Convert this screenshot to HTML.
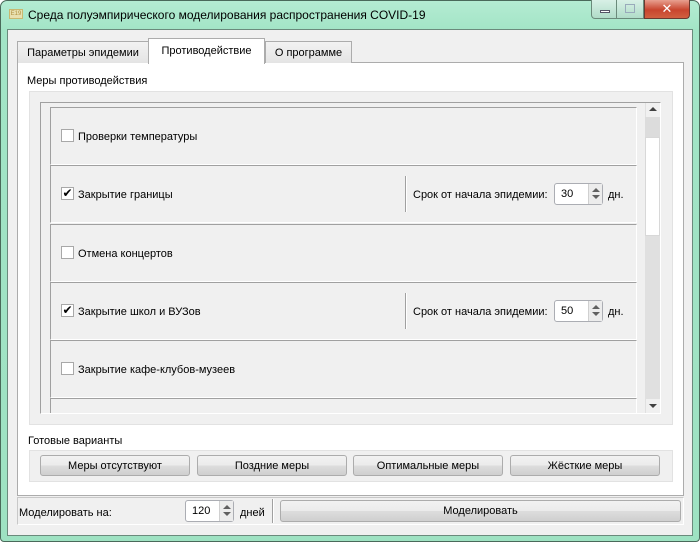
<!DOCTYPE html>
<html><head><meta charset="utf-8"><style>
*{box-sizing:border-box;margin:0;padding:0}
body{width:700px;height:542px;overflow:hidden;background:#fff;font-family:"Liberation Sans","DejaVu Sans",sans-serif;font-size:11px;color:#000;position:relative}
.a{position:absolute}
.win{left:0;top:0;width:700px;height:542px;border-radius:7px 7px 4px 4px;background:linear-gradient(180deg,#b4ecd2 0,#a2e4c6 30px,#9ee2c2 100%);border:1px solid #4a6a5a}
.client{left:7px;top:29px;width:686px;height:507px;background:#f0f0f0;border:1px solid #6b8a7c}
.tab{height:22px;border:1px solid #acacac;border-bottom:none;background:linear-gradient(#f2f2f2,#e4e4e4);text-align:center;line-height:22px}
.pane{left:17px;top:62px;width:667px;height:434px;background:#fff;border:1px solid #acacac}
.sunk{border-top:1px solid #a0a0a0;border-left:1px solid #a0a0a0;border-right:1px solid #fff;border-bottom:1px solid #fff}
.row{left:50px;width:587px;height:58px;background:#f0f0f0;border-top:1px solid #a0a0a0;border-left:1px solid #a0a0a0;border-right:1px solid #fff;border-bottom:1px solid #fff}
.cb{position:absolute;left:10px;width:13px;height:13px;background:#fff;border:1px solid #a8a8a8}
.lbl{position:absolute;left:27px}
.btn{height:21px;border:1px solid #acacac;border-radius:3px;background:linear-gradient(#f2f2f2 0,#ebebeb 50%,#dddddd 51%,#cfcfcf 100%);text-align:center;line-height:20px}
.spin{width:49px;height:22px;background:#fff;border:1px solid #abadb3;border-radius:3px;padding-left:6px;line-height:21px}
.spin i{position:absolute;right:0;top:0;width:14px;height:20px;border-left:1px solid #d0d0d0;background:#ececec}
.spin i:before{content:"";position:absolute;left:3px;top:4px;border:4px solid transparent;border-bottom:4px solid #606060;border-top:none}
.spin i:after{content:"";position:absolute;left:3px;top:11px;border:4px solid transparent;border-top:4px solid #606060;border-bottom:none}
</style></head><body>
<div class="a win"></div>
<div class="a" style="left:9px;top:9px;width:14px;height:10px;background:#e8e0b0;border:1px solid #c8b870;font-size:6px;color:#b09040;line-height:8px;text-align:center">E19</div>
<div class="a" style="left:28px;top:8px;font-size:12px;color:#000">Среда полуэмпирического моделирования распространения COVID-19</div>
<div class="a" style="left:591px;top:0;width:26px;height:19px;border:1px solid #6a8a7a;border-top:none;border-radius:0 0 0 4px;background:linear-gradient(#d8f0e6,#b0dcc8)"><div class="a" style="left:8px;top:10px;width:10px;height:3px;background:#fff;border:1px solid #556"></div></div>
<div class="a" style="left:617px;top:0;width:27px;height:19px;border:1px solid #6a8a7a;border-top:none;border-left:none;background:linear-gradient(#d8f0e6,#b0dcc8)"><div class="a" style="left:8px;top:4px;width:10px;height:9px;border:1px solid #9ab;"></div></div>
<div class="a" style="left:644px;top:0;width:46px;height:19px;border:1px solid #6a3a30;border-top:none;border-radius:0 0 4px 0;background:linear-gradient(#e8a090,#c8452e 55%,#d06040)"><div class="a" style="left:0;width:44px;top:0;text-align:center;color:#fff;font-weight:bold;font-size:13px;line-height:17px">✕</div></div>
<div class="a client"></div>
<div class="a pane"></div>
<div class="a tab" style="left:17px;top:41px;width:132px">Параметры эпидемии</div>
<div class="a tab" style="left:265px;top:41px;width:87px">О программе</div>
<div class="a tab" style="left:148px;top:38px;width:117px;height:26px;background:#fff;line-height:25px;border-bottom:none">Противодействие</div>
<div class="a" style="left:27px;top:75px">Меры противодействия</div>
<div class="a" style="left:29px;top:91px;width:644px;height:334px;border:1px solid #e2e2e2;background:#f0f0f0"></div>
<div class="a sunk" style="left:40px;top:102px;width:621px;height:312px;background:#f0f0f0"></div>
<div class="a row" style="top:107px"><div class="cb" style="top:21px"></div><div class="lbl" style="top:23px">Проверки температуры</div></div>
<div class="a row" style="top:165px"><div class="cb" style="top:21px;text-align:center;line-height:11px;font-size:12px">✔</div><div class="lbl" style="top:23px">Закрытие границы</div>
<div class="a" style="left:354px;top:10px;width:2px;height:36px;border-left:1px solid #a0a0a0;border-right:1px solid #fff"></div>
<div class="a" style="left:362px;top:23px">Срок от начала эпидемии:</div>
<div class="a spin" style="left:503px;top:17px">30<i></i></div>
<div class="a" style="left:557px;top:23px">дн.</div></div>
<div class="a row" style="top:224px"><div class="cb" style="top:21px"></div><div class="lbl" style="top:23px">Отмена концертов</div></div>
<div class="a row" style="top:282px"><div class="cb" style="top:21px;text-align:center;line-height:11px;font-size:12px">✔</div><div class="lbl" style="top:23px">Закрытие школ и ВУЗов</div>
<div class="a" style="left:354px;top:10px;width:2px;height:36px;border-left:1px solid #a0a0a0;border-right:1px solid #fff"></div>
<div class="a" style="left:362px;top:23px">Срок от начала эпидемии:</div>
<div class="a spin" style="left:503px;top:17px">50<i></i></div>
<div class="a" style="left:557px;top:23px">дн.</div></div>
<div class="a row" style="top:340px"><div class="cb" style="top:21px"></div><div class="lbl" style="top:23px">Закрытие кафе-клубов-музеев</div></div>
<div class="a row" style="top:398px;height:15px;border-bottom:none"></div>
<div class="a" style="left:645px;top:103px;width:15px;height:310px;background:#f0f0f0;border-left:1px solid #e0e0e0"></div>
<div class="a" style="left:649px;top:107px;border:4px solid transparent;border-bottom:4px solid #404040;border-top:none"></div>
<div class="a" style="left:645px;top:117px;width:15px;height:20px;background:#dcdcdc"></div>
<div class="a" style="left:645px;top:137px;width:15px;height:99px;background:#fff;border:1px solid #d8d8d8"></div>
<div class="a" style="left:645px;top:236px;width:15px;height:163px;background:#e0e0e0"></div>
<div class="a" style="left:649px;top:404px;border:4px solid transparent;border-top:4px solid #404040;border-bottom:none"></div>
<div class="a" style="left:28px;top:435px">Готовые варианты</div>
<div class="a" style="left:29px;top:450px;width:644px;height:32px;border:1px solid #e2e2e2;background:#f0f0f0"></div>
<div class="a btn" style="left:40px;top:455px;width:150px">Меры отсутствуют</div>
<div class="a btn" style="left:197px;top:455px;width:150px">Поздние меры</div>
<div class="a btn" style="left:353px;top:455px;width:150px">Оптимальные меры</div>
<div class="a btn" style="left:510px;top:455px;width:150px">Жёсткие меры</div>
<div class="a" style="left:17px;top:497px;width:667px;height:28px;border:1px solid #c8c8c8;border-right:1px solid #fff;border-bottom:1px solid #fff"></div>
<div class="a" style="left:19px;top:507px">Моделировать на:</div>
<div class="a spin" style="left:185px;top:500px;width:49px">120<i></i></div>
<div class="a" style="left:240px;top:507px">дней</div>
<div class="a" style="left:272px;top:499px;width:2px;height:24px;border-left:1px solid #a0a0a0;border-right:1px solid #fff"></div>
<div class="a btn" style="left:280px;top:500px;width:401px;height:22px;line-height:21px">Моделировать</div>
</body></html>
